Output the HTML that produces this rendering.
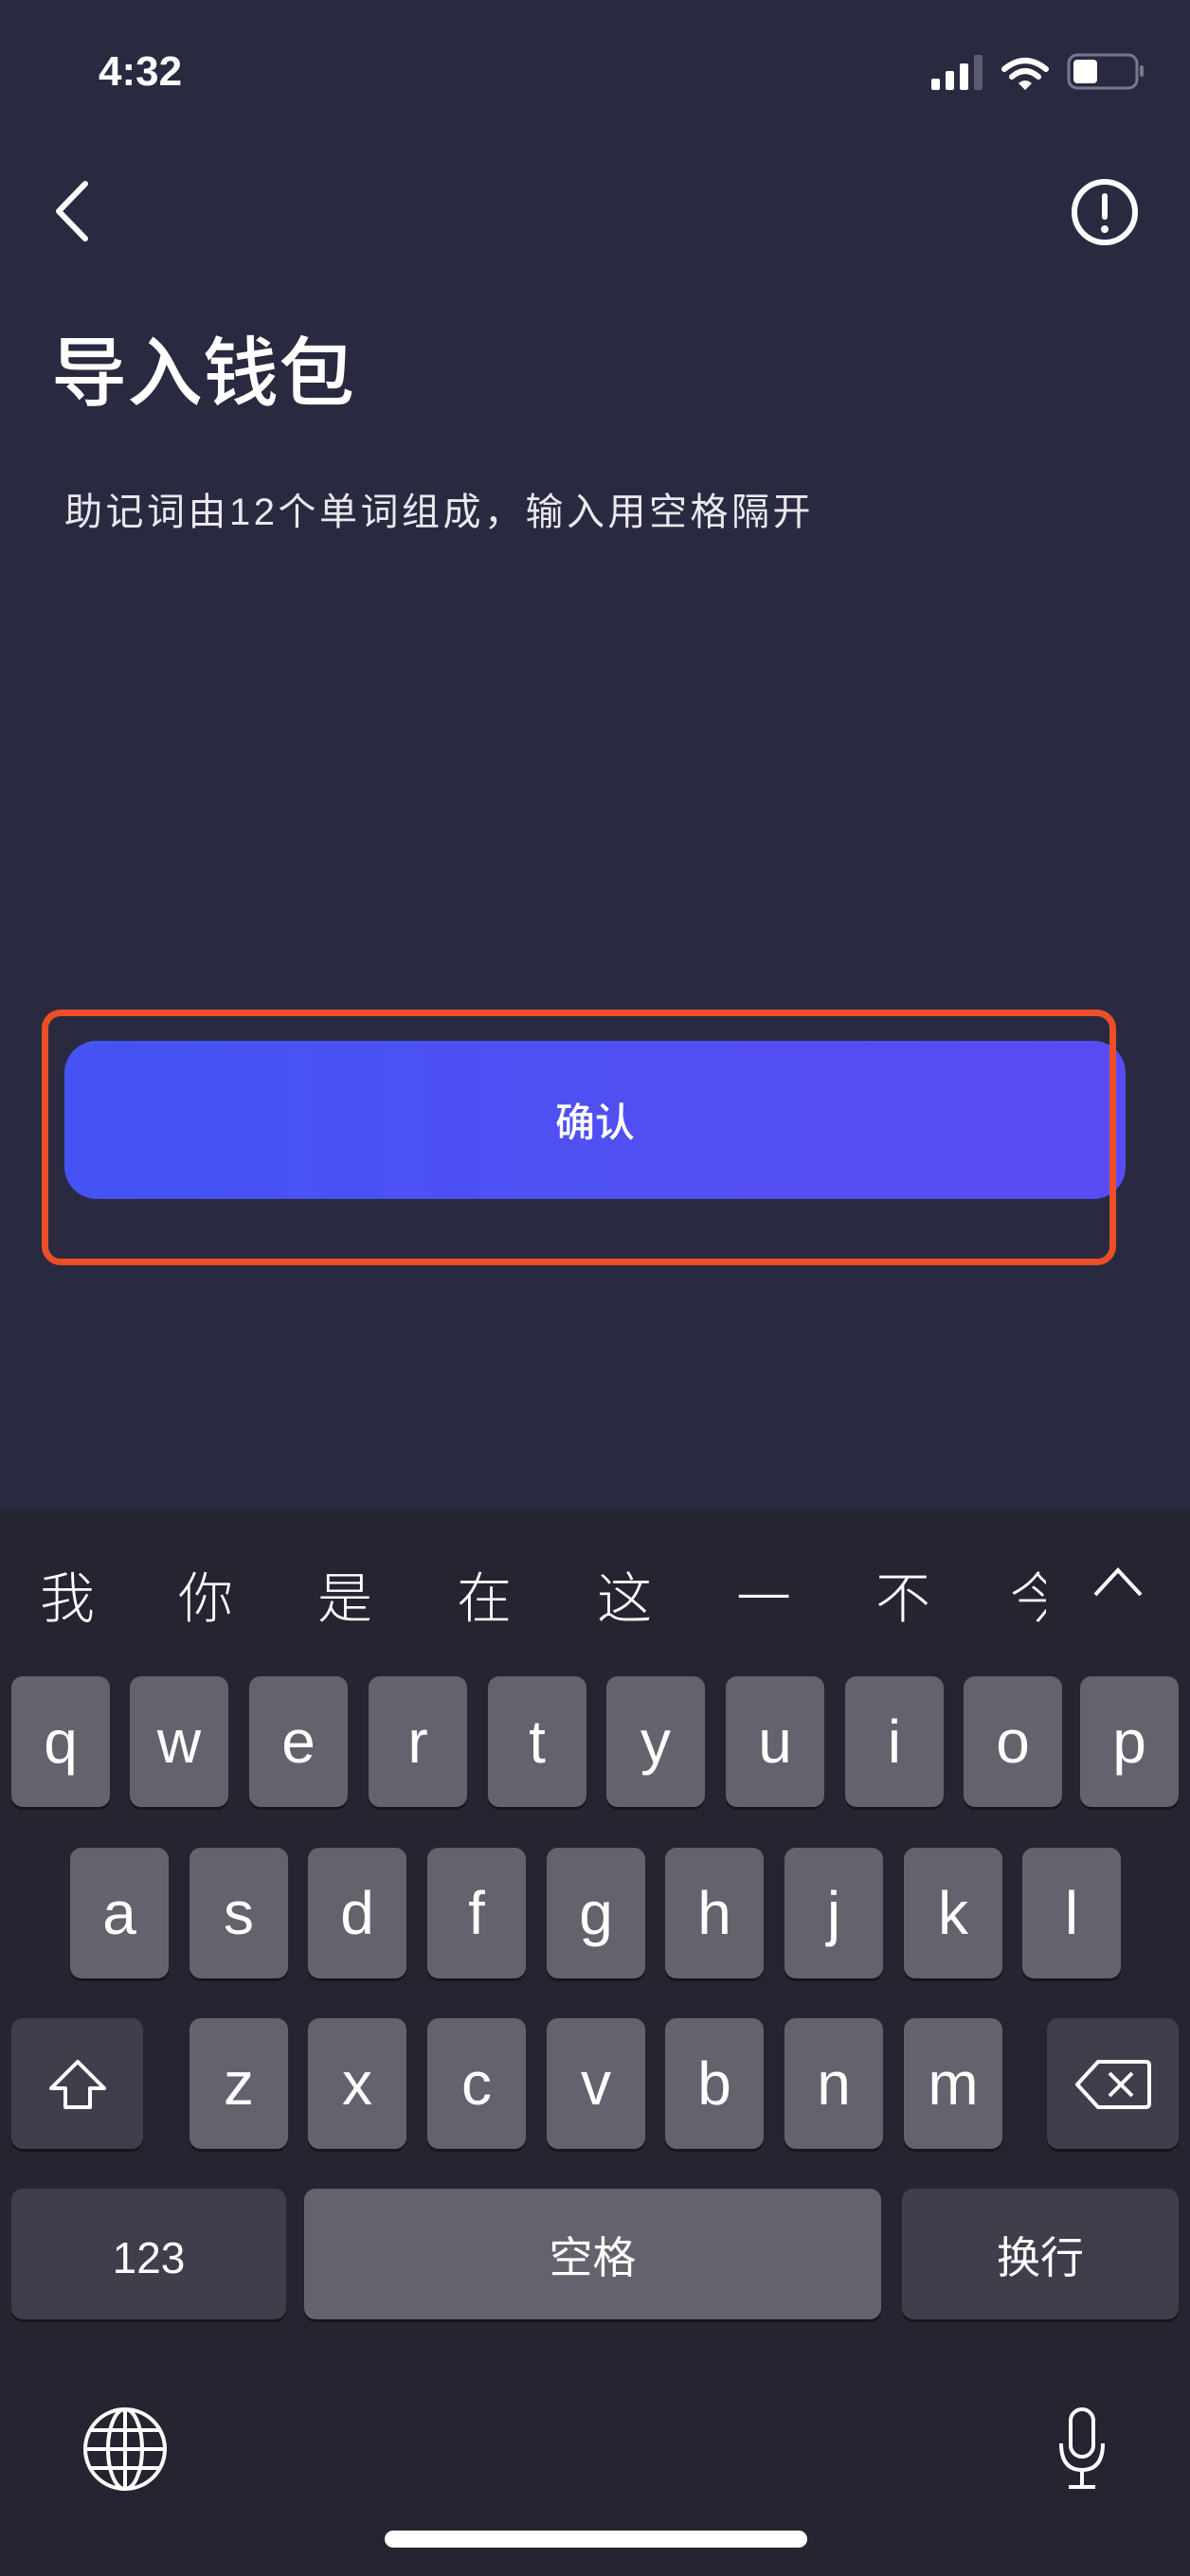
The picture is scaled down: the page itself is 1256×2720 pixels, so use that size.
<!DOCTYPE html>
<html><head><meta charset="utf-8"><style>
*{margin:0;padding:0;box-sizing:border-box}
body{width:1256px;height:2720px;background:#292a40;position:relative;overflow:hidden;font-family:"Liberation Sans","Noto Sans CJK SC",sans-serif;color:#fff}
.a{position:absolute}
.k{position:absolute;background:#62636d;border-radius:12px;box-shadow:0 3px 0 #16161c;color:#fff;font-size:64px;text-align:center;width:104px;height:138px;line-height:138px}
.f{background:#3e3f4b}
.s{position:absolute;top:1645px;font-size:58px;line-height:76px;font-family:"Noto Sans CJK SC",sans-serif;font-weight:300}
</style></head><body>
<div class="a" style="left:104px;top:48px;font-size:44px;font-weight:bold;line-height:56px">4:32</div>
<svg class="a" style="left:980px;top:55px" width="230" height="42" viewBox="0 0 230 42">
<rect x="3" y="28" width="9" height="12" rx="2" fill="#fff"/>
<rect x="18" y="20" width="9" height="20" rx="2" fill="#fff"/>
<rect x="33" y="12" width="9" height="28" rx="2" fill="#fff"/>
<rect x="48" y="3" width="9" height="37" rx="2" fill="#5a5c70"/>
<path d="M80 18 Q102 0 124 18" stroke="#fff" stroke-width="6" fill="none" stroke-linecap="round"/>
<path d="M88 26 Q102 14 116 26" stroke="#fff" stroke-width="6" fill="none" stroke-linecap="round"/>
<path d="M95 33 L102 40 L109 33 Q102 27 95 33Z" fill="#fff"/>
<rect x="148" y="3" width="72" height="35" rx="9" fill="none" stroke="#777a8c" stroke-width="3"/>
<rect x="153" y="8" width="25" height="25" rx="4" fill="#fff"/>
<rect x="223" y="14" width="4" height="12" rx="2" fill="#777a8c"/>
</svg>
<svg class="a" style="left:50px;top:190px" width="50" height="66"><path d="M40 4 L12 33 L40 62" stroke="#fff" stroke-width="6" fill="none" stroke-linecap="round" stroke-linejoin="round"/></svg>
<svg class="a" style="left:1128px;top:186px" width="76" height="76"><circle cx="38" cy="38" r="32" stroke="#fff" stroke-width="6" fill="none"/><rect x="35" y="18" width="6" height="28" rx="3" fill="#fff"/><circle cx="38" cy="56" r="4" fill="#fff"/></svg>
<div class="a" style="left:54px;top:338px;font-size:80px;line-height:100px;font-weight:500;font-family:'Noto Sans CJK SC',sans-serif">导入钱包</div>
<div class="a" style="left:68px;top:514px;font-size:40px;line-height:54px;color:#e8e8ee;letter-spacing:3.5px;white-space:nowrap">助记词由12个单词组成，输入用空格隔开</div>
<div class="a" style="left:68px;top:1099px;width:1120px;height:167px;border-radius:34px;background:linear-gradient(90deg,#4453f2,#5a4cf2);font-size:42px;font-weight:500;font-family:'Noto Sans CJK SC',sans-serif;text-align:center;line-height:167px">确认</div>
<div class="a" style="left:44px;top:1066px;width:1134px;height:270px;border:7px solid #ec4f27;border-radius:20px"></div>
<div class="a" style="left:0;top:1595px;width:1256px;height:1125px;background:#242530"></div>
<div class="s" style="left:42px">我</div><div class="s" style="left:188px">你</div><div class="s" style="left:335px">是</div><div class="s" style="left:482px">在</div><div class="s" style="left:630px">这</div><div class="s" style="left:777px">一</div><div class="s" style="left:924px">不</div>
<div class="s" style="left:1066px;width:38px;overflow:hidden">今</div>
<svg class="a" style="left:1150px;top:1650px" width="60" height="40"><path d="M6 34 L30 8 L54 34" stroke="#fff" stroke-width="4" fill="none"/></svg>
<div class="k" style="left:12px;top:1770px">q</div><div class="k" style="left:137px;top:1770px">w</div><div class="k" style="left:263px;top:1770px">e</div><div class="k" style="left:389px;top:1770px">r</div><div class="k" style="left:515px;top:1770px">t</div><div class="k" style="left:640px;top:1770px">y</div><div class="k" style="left:766px;top:1770px">u</div><div class="k" style="left:892px;top:1770px">i</div><div class="k" style="left:1017px;top:1770px">o</div><div class="k" style="left:1140px;top:1770px">p</div>
<div class="k" style="left:74px;top:1951px">a</div><div class="k" style="left:200px;top:1951px">s</div><div class="k" style="left:325px;top:1951px">d</div><div class="k" style="left:451px;top:1951px">f</div><div class="k" style="left:577px;top:1951px">g</div><div class="k" style="left:702px;top:1951px">h</div><div class="k" style="left:828px;top:1951px">j</div><div class="k" style="left:954px;top:1951px">k</div><div class="k" style="left:1079px;top:1951px">l</div>
<div class="k f" style="left:12px;top:2131px;width:139px"><svg width="80" height="60" style="margin-top:40px"><path d="M40 6 L12 34 L27 34 L27 54 L53 54 L53 34 L68 34 Z" stroke="#fff" stroke-width="4" fill="none" stroke-linejoin="round"/></svg></div>
<div class="k" style="left:200px;top:2131px">z</div><div class="k" style="left:325px;top:2131px">x</div><div class="k" style="left:451px;top:2131px">c</div><div class="k" style="left:577px;top:2131px">v</div><div class="k" style="left:702px;top:2131px">b</div><div class="k" style="left:828px;top:2131px">n</div><div class="k" style="left:954px;top:2131px">m</div>
<div class="k f" style="left:1105px;top:2131px;width:139px"><svg width="84" height="60" style="margin-top:40px"><path d="M26 6 L76 6 Q80 6 80 10 L80 50 Q80 54 76 54 L26 54 L4 30 Z" stroke="#fff" stroke-width="4" fill="none" stroke-linejoin="round"/><path d="M38 18 L62 42 M62 18 L38 42" stroke="#fff" stroke-width="4"/></svg></div>
<div class="k f" style="left:12px;top:2311px;width:290px;font-size:46px;line-height:146px">123</div>
<div class="k" style="left:321px;top:2311px;width:609px;font-size:46px;line-height:146px">空格</div>
<div class="k f" style="left:952px;top:2311px;width:292px;font-size:46px;line-height:146px">换行</div>
<svg class="a" style="left:86px;top:2540px" width="92" height="92" viewBox="0 0 92 92" fill="none" stroke="#fff" stroke-width="4"><circle cx="46" cy="46" r="42"/><ellipse cx="46" cy="46" rx="18" ry="42"/><path d="M46 4 V88 M4 46 H88 M10 26 H82 M10 66 H82"/></svg>
<svg class="a" style="left:1112px;top:2540px" width="60" height="92" fill="none" stroke="#fff" stroke-width="4"><rect x="18" y="4" width="24" height="50" rx="12"/><path d="M8 40 Q8 68 30 68 Q52 68 52 40 M30 68 V84 M16 86 H44"/></svg>
<div class="a" style="left:406px;top:2672px;width:446px;height:18px;border-radius:9px;background:#fff"></div>
</body></html>
